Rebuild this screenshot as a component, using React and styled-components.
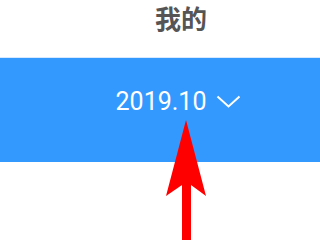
import React from 'react'
import styled, { createGlobalStyle } from 'styled-components'

const GlobalStyle = createGlobalStyle`
  html, body {
    margin: 0;
    padding: 0;
    background: #ffffff;
  }
  body {
    width: 320px;
    height: 240px;
    overflow: hidden;
  }
`
const Page = styled.div`
  position: relative;
  width: 320px;
  height: 240px;
  background: #ffffff;
  font-family: Roboto, 'Noto Sans CJK SC', sans-serif;
`
const Header = styled.div`
  height: 57px;
  box-sizing: border-box;
  padding: 5px 0 0 42px;
  display: flex;
  justify-content: center;
`
const Title = styled.h1`
  margin: 0;
  font-family: 'Noto Sans CJK SC', sans-serif;
  font-size: 26px;
  line-height: 26px;
  font-weight: 700;
  color: #555555;
`
const MonthBar = styled.div`
  height: 105px;
  box-sizing: border-box;
  border-top: 1px solid #d6e9ff;
  background: #3499fe;
  padding: 31px 0 0 37px;
  display: flex;
  justify-content: center;
  align-items: flex-start;
`
const MonthPicker = styled.button`
  display: flex;
  align-items: center;
  gap: 10px;
  padding: 0;
  border: none;
  background: none;
  color: #ffffff;
  font-family: Roboto, sans-serif;
  font-size: 25px;
  line-height: 25px;
  cursor: pointer;
`
const Pointer = styled.svg`
  position: absolute;
  left: 164px;
  top: 118px;
`

export default function App() {
  return (
    <Page>
      <GlobalStyle />
      <Header>
        <Title>我的</Title>
      </Header>
      <MonthBar>
        <MonthPicker>
          2019.10
          <svg width='25' height='13' viewBox='0 0 25 13'>
            <polyline
              points='1.5,1.5 12.5,11.5 23.5,1.5'
              fill='none'
              stroke='#ffffff'
              strokeWidth='2'
            />
          </svg>
        </MonthPicker>
      </MonthBar>
      <Pointer width='44' height='122' viewBox='0 0 44 122'>
        <polygon
          points='22,2 42,78 27,67 27,122 18,122 18,67 2,78'
          fill='#ff0000'
        />
      </Pointer>
    </Page>
  )
}
